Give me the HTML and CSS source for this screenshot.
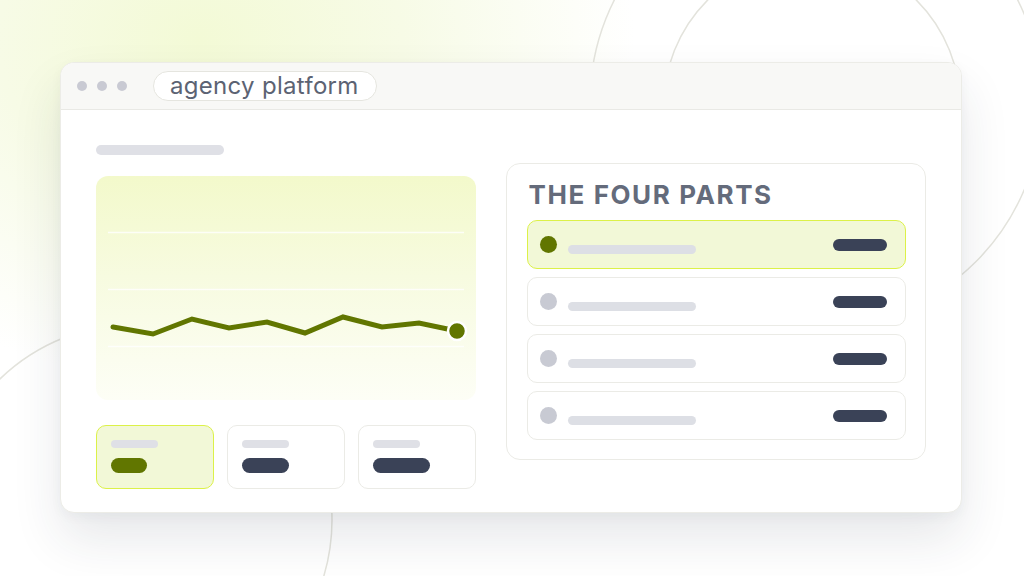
FILE: index.html
```html
<!DOCTYPE html>
<html lang="en">
<head>
<meta charset="utf-8">
<title>agency platform</title>
<link rel="stylesheet" href="styles.css">
</head>
<body>
<div class="stage">
  <svg class="bg-rings" width="1024" height="576" viewBox="0 0 1024 576" aria-hidden="true">
    <circle cx="816" cy="102" r="226" />
    <circle cx="812" cy="105" r="148" />
    <circle cx="136" cy="520" r="196" />
  </svg>

  <div class="window">
    <div class="titlebar">
      <div class="dots"><span></span><span></span><span></span></div>
      <div class="address">agency platform</div>
    </div>
    <div class="body">
      <div class="left">
        <div class="skel-title"></div>
        <div class="chart">
          <svg viewBox="0 0 380 224" width="380" height="224">
            <line class="grid" x1="12" y1="56.5" x2="368" y2="56.5" />
            <line class="grid" x1="12" y1="113.5" x2="368" y2="113.5" />
            <line class="grid" x1="12" y1="170.5" x2="368" y2="170.5" />
            <polyline class="trend" points="17,151 57,158 96,143 133,152 171,146 209,157 247,141 286,151 323,147 361,155" />
            <circle class="end" cx="361" cy="155" r="9" />
          </svg>
        </div>
        <div class="stats">
          <div class="stat active"><span class="s-lbl"></span><span class="s-val w1"></span></div>
          <div class="stat"><span class="s-lbl"></span><span class="s-val w2"></span></div>
          <div class="stat"><span class="s-lbl"></span><span class="s-val w3"></span></div>
        </div>
      </div>
      <div class="panel">
        <h2 class="panel-title">THE FOUR PARTS</h2>
        <div class="rows">
          <div class="row active"><span class="dot"></span><span class="r-lbl"></span><span class="r-val"></span></div>
          <div class="row"><span class="dot"></span><span class="r-lbl"></span><span class="r-val"></span></div>
          <div class="row"><span class="dot"></span><span class="r-lbl"></span><span class="r-val"></span></div>
          <div class="row"><span class="dot"></span><span class="r-lbl"></span><span class="r-val"></span></div>
        </div>
      </div>
    </div>
  </div>
</div>
</body>
</html>
```
FILE: styles.css
```css
* { box-sizing: border-box; }
html, body { margin: 0; padding: 0; }
body {
  width: 1024px;
  height: 576px;
  overflow: hidden;
  font-family: Inter, "Noto Sans", "Liberation Sans", sans-serif;
  background: #ffffff;
}
.stage {
  position: relative;
  width: 1024px;
  height: 576px;
  padding: 62px 62px 0 60px;
  background:
    radial-gradient(ellipse 580px 460px at 200px 40px, rgba(243,250,214,1) 0%, rgba(245,250,224,0.8) 35%, rgba(255,255,255,0) 75%),
    #ffffff;
}
.bg-rings {
  position: absolute;
  left: 0; top: 0;
  z-index: 0;
}
.bg-rings circle {
  fill: none;
  stroke: #e3e3dc;
  stroke-width: 1.5;
}
.window {
  position: relative;
  z-index: 1;
  width: 902px;
  height: 451px;
  background: #ffffff;
  border: 1px solid #ecece7;
  border-radius: 14px;
  overflow: hidden;
  box-shadow: 0 26px 50px rgba(35, 45, 65, 0.11), 0 4px 12px rgba(35, 45, 65, 0.04);
}
.titlebar {
  height: 47px;
  background: #f8f8f6;
  border-bottom: 1px solid #e9e9e5;
  display: flex;
  align-items: center;
  padding-left: 16px;
}
.dots { display: flex; gap: 10px; }
.dots span {
  width: 10px; height: 10px;
  border-radius: 50%;
  background: #c9cad3;
}
.address {
  margin-left: 26px;
  height: 30px;
  padding: 0 17px 0 16px;
  border: 1px solid #e5e5df;
  border-radius: 15px;
  background: #ffffff;
  color: #5c6373;
  font-size: 24px;
  line-height: 27px;
  letter-spacing: 0.3px;
}
.body {
  display: flex;
  gap: 30px;
  padding: 35px 35px 0 35px;
}
.left { width: 380px; display: flex; flex-direction: column; }
.skel-title {
  width: 128px; height: 10px;
  border-radius: 5px;
  background: #dfe0e6;
}
.chart {
  margin-top: 21px;
  height: 224px;
  border-radius: 12px;
  background: linear-gradient(180deg, #f3f9cb 0%, #f7fbe0 45%, #fdfef6 100%);
  overflow: hidden;
}
.chart svg { display: block; }
.grid { stroke: #ffffff; stroke-opacity: 0.8; stroke-width: 1.5; }
.trend {
  fill: none;
  stroke: #617600;
  stroke-width: 5;
  stroke-linejoin: miter;
  stroke-linecap: round;
}
.end { fill: #617600; stroke: #ffffff; stroke-width: 2.5; }
.stats {
  margin-top: 25px;
  display: flex;
  gap: 13px;
}
.stat {
  width: 118px; height: 64px;
  border: 1.5px solid #ebebe6;
  border-radius: 10px;
  background: #ffffff;
  padding: 14px 0 0 14px;
  display: flex;
  flex-direction: column;
  gap: 10px;
}
.stat.active { background: #f2f8d7; border-color: #dcf148; }
.s-lbl { width: 47px; height: 8px; border-radius: 4px; background: #dfe0e6; }
.s-val { height: 15px; border-radius: 8px; background: #3a4257; }
.stat.active .s-val { background: #617600; }
.w1 { width: 36px; }
.w2 { width: 47px; }
.w3 { width: 57px; }
.panel {
  width: 421px;
  height: 297px;
  margin-top: 18px;
  border: 1.5px solid #ebebe6;
  border-radius: 14px;
  padding: 16px 19px 0 19.5px;
}
.panel-title {
  margin: 0 0 10px 2px;
  font-size: 26px;
  line-height: 30px;
  font-weight: 700;
  letter-spacing: 1.6px;
  color: #646b7b;
}
.rows { display: flex; flex-direction: column; gap: 8px; }
.row {
  height: 49px;
  border: 1.5px solid #ebebe6;
  border-radius: 10px;
  background: #ffffff;
  display: flex;
  align-items: center;
  padding: 0 18px 0 12px;
}
.row.active { background: #f2f8d7; border-color: #dcf148; }
.dot { width: 17px; height: 17px; border-radius: 50%; background: #c8cad3; flex: none; }
.row.active .dot { background: #617600; }
.r-lbl {
  width: 128px; height: 9px;
  margin-left: 11px;
  margin-top: 9px;
  border-radius: 5px;
  background: #dddfe5;
}
.r-val {
  margin-left: auto;
  width: 54px; height: 12px;
  border-radius: 6px;
  background: #3a4257;
}
```
